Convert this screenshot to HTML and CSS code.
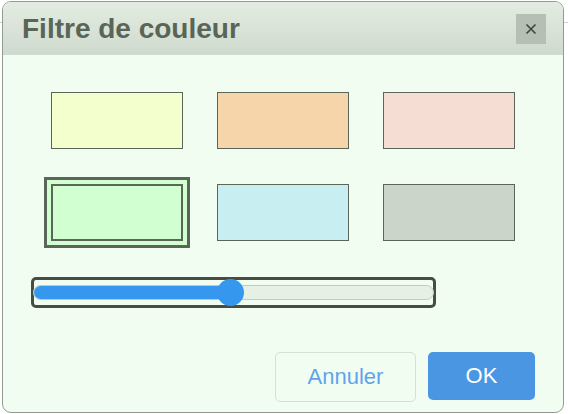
FILE: index.html
```html
<!DOCTYPE html>
<html lang="fr">
<head>
    <meta charset="UTF-8">
    <meta name="viewport" content="width=device-width, initial-scale=1.0">
    <title>Filtre de couleur</title>
    <link rel="stylesheet" href="styles.css">
</head>
<body>
    <div class="dialog">
        <div class="dialog-header">
            <h1>Filtre de couleur</h1>
            <button class="close-btn" aria-label="Fermer">
                <svg width="12" height="12" viewBox="0 0 12 12">
                    <path d="M1.5 1.5 L10.5 10.5 M10.5 1.5 L1.5 10.5" stroke="#3c463a" stroke-width="1.6" fill="none"/>
                </svg>
            </button>
        </div>

        <div class="dialog-body">
            <div class="swatches">
                <div class="swatch yellow"></div>
                <div class="swatch orange"></div>
                <div class="swatch pink"></div>
                <div class="swatch green selected"></div>
                <div class="swatch blue"></div>
                <div class="swatch grey"></div>
            </div>

            <div class="slider">
                <div class="track">
                    <div class="fill" style="width: 197px;"></div>
                </div>
                <div class="thumb" style="left: 183px;"></div>
            </div>
        </div>

        <div class="dialog-footer">
            <button class="btn btn-cancel">Annuler</button>
            <button class="btn btn-ok">OK</button>
        </div>
    </div>
</body>
</html>
```

FILE: styles.css
```css
body {
    margin: 0;
    height: 414px;
    background-color: #ffffff;
    background-image: linear-gradient(to bottom, transparent 22px, #c9d0c8 22px, #c9d0c8 23px, transparent 23px);
    font-family: 'Liberation Sans', Arial, sans-serif;
}
.dialog {
    width: 560px;
    height: 410px;
    margin: 0 0 0 2px;
    position: relative;
    top: 1px;
    background-color: #f2fdf2;
    border: 1px solid #8e9e8c;
    border-radius: 9px;
    overflow: hidden;
    display: flex;
    flex-direction: column;
}
.dialog-header {
    height: 53px;
    display: flex;
    align-items: center;
    justify-content: space-between;
    padding: 0 17px 0 19px;
    background-image: linear-gradient(to bottom, #e3ece1, #cfdace);
}
.dialog-header h1 {
    margin: 0;
    font-size: 28px;
    font-weight: bold;
    color: #596557;
}
.close-btn {
    width: 30px;
    height: 30px;
    padding: 0;
    border: none;
    background-color: #b5bfb3;
    display: flex;
    align-items: center;
    justify-content: center;
    cursor: pointer;
}
.dialog-body {
    flex: 1;
    padding: 37px 0 0 28px;
}
.swatches {
    display: grid;
    grid-template-columns: repeat(3, 132px);
    grid-auto-rows: 57px;
    column-gap: 34px;
    row-gap: 35px;
    margin-left: 20px;
}
.swatch {
    box-sizing: border-box;
    border: 1px solid #5a6658;
}
.swatch.yellow { background-color: #f3ffcc; }
.swatch.orange { background-color: #f6d5ab; }
.swatch.pink { background-color: #f5ddd3; }
.swatch.green { background-color: #d1ffd1; }
.swatch.blue { background-color: #c8eef2; }
.swatch.grey { background-color: #cbd5c9; }
.swatch.selected {
    border-width: 2px;
    box-shadow: 0 0 0 4px #d1ffd1, 0 0 0 7px #5a6658;
}
.slider {
    position: relative;
    box-sizing: border-box;
    width: 405px;
    height: 31px;
    margin-top: 36px;
    border: 3px solid #464e44;
    border-radius: 5px;
    padding: 5px 0 0 0;
}
.track {
    box-sizing: border-box;
    height: 15px;
    margin: 0 -1px;
    background-color: #e6f0e4;
    border: 1px solid #c3cbc1;
    border-radius: 8px;
    overflow: hidden;
}
.fill {
    height: 100%;
    background-color: #3597ee;
}
.thumb {
    position: absolute;
    top: -1px;
    width: 27px;
    height: 27px;
    border-radius: 50%;
    background-color: #3597ee;
}
.dialog-footer {
    display: flex;
    justify-content: flex-end;
    align-items: flex-start;
    gap: 12px;
    padding: 0 28px 10px 0;
}
.btn {
    font-family: 'Liberation Sans', Arial, sans-serif;
    font-size: 22px;
    border-radius: 5px;
    cursor: pointer;
}
.btn-cancel {
    width: 141px;
    height: 50px;
    background-color: transparent;
    border: 1px solid #d6e0d4;
    color: #5fa4ea;
}
.btn-ok {
    width: 107px;
    height: 48px;
    background-color: #4a96e2;
    border: none;
    color: #ffffff;
}
```
